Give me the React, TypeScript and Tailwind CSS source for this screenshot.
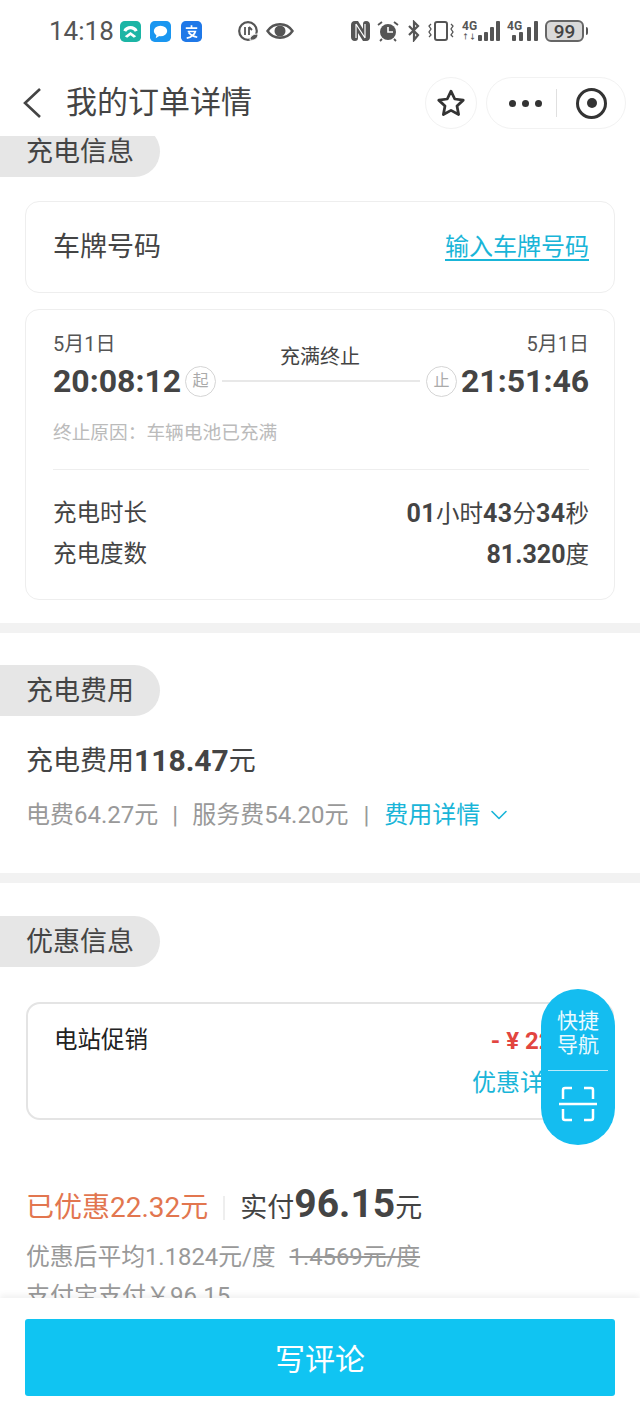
import { ChevronDown } from "lucide-react"

function SectionTag({ label }: { label: string }) {
  return (
    <div className="w-[160px] h-[51px] bg-[#e6e6e6] rounded-r-[26px] flex items-center pl-[26px] pt-[1px] text-[27px] text-[#444] leading-none">
      {label}
    </div>
  )
}

function StatusLeft() {
  return (
    <div className="flex items-center">
      <span className="text-[26px] text-[#555] ml-[49px] w-[64px] leading-none">14:18</span>
      <svg width="21" height="21" viewBox="0 0 22 22" className="ml-[7px]">
        <rect width="22" height="22" rx="5" fill="#1cb5a5" />
        <path d="M3.500 10c2-6.500 13-6.500 15 0l-3 1.200c-1.500-3.500-7.500-3.500-9 0z M5 16l6-4.500 6 4.500-2.500 1.500-3.500-2.500-3.500 2.500z" fill="#fff" />
      </svg>
      <svg width="21" height="21" viewBox="0 0 22 22" className="ml-[9px]">
        <rect width="22" height="22" rx="5" fill="#1a96f0" />
        <ellipse cx="11" cy="10.500" rx="7" ry="5.500" fill="#fff" />
        <path d="M7 14l-1 4 5-3z" fill="#fff" />
      </svg>
      <svg width="21" height="21" viewBox="0 0 22 22" className="ml-[10px]">
        <rect width="22" height="22" rx="5" fill="#1f78e8" />
        <path d="M5 7.500h12M11 4.500v3M7 11h8c-1 4-4 6-9 7M8 12c2 3 5 4 9 5" stroke="#fff" strokeWidth="1.800" fill="none" />
      </svg>
      <svg width="22" height="22" viewBox="0 0 22 22" className="ml-[35px]">
        <circle cx="11" cy="11" r="8.800" stroke="#555" strokeWidth="2.200" fill="none" />
        <path d="M8 7v8M12 7v8M12 7l3 3" stroke="#555" strokeWidth="1.800" fill="none" />
        <path d="M13 20c0-4 3-6 8-6 0 4-3 7-8 6z" fill="#555" stroke="#fff" strokeWidth="1" />
      </svg>
      <svg width="28" height="20" viewBox="0 0 28 20" className="ml-[7px]">
        <path d="M1.500 10c6-9 19-9 25 0-6 9-19 9-25 0z" stroke="#555" strokeWidth="2.400" fill="none" />
        <circle cx="14" cy="10" r="5.500" fill="#555" />
      </svg>
    </div>
  )
}

function StatusRight() {
  return (
    <div className="flex items-center ml-auto mr-[52px]">
      <svg width="19" height="20" viewBox="0 0 19 20">
        <path d="M4 0h3l5 8V3c0-2 1-3 3-3 3 0 4 2 4 4v12c0 2-1 4-4 4h-3l-5-8v5c0 2-1 3-3 3-3 0-4-2-4-4V4c0-2 1-4 4-4z" fill="#555" />
        <path d="M5 3v14M14 3v14M5 3l9 14" stroke="#fff" strokeWidth="1.200" fill="none" />
      </svg>
      <svg width="22" height="22" viewBox="0 0 22 22" className="ml-[7px]">
        <circle cx="11" cy="12" r="8" fill="#555" />
        <path d="M11 7v5h5" stroke="#fff" strokeWidth="1.600" fill="none" />
        <path d="M1 5l4-3M21 5l-4-3M5 19l-2 2M17 19l2 2" stroke="#555" strokeWidth="1.800" />
      </svg>
      <svg width="14" height="22" viewBox="0 0 14 22" className="ml-[8px]">
        <path d="M2 6l9 9-4 5V2l4 4-9 9" stroke="#555" strokeWidth="2.200" fill="none" />
      </svg>
      <svg width="26" height="20" viewBox="0 0 26 20" className="ml-[7px]">
        <rect x="7" y="1" width="12" height="18" rx="2" stroke="#555" strokeWidth="2" fill="none" />
        <path d="M3 3l-2 2 2 3-2 3 2 3-2 2M23 3l2 2-2 3 2 3-2 3 2 2" stroke="#555" strokeWidth="1.300" fill="none" />
      </svg>
      <div className="relative w-[38px] h-[20px] ml-[8px]">
        <span className="absolute left-0 top-[-1px] text-[12px] font-bold text-[#555] leading-none">4G</span>
        <span className="absolute left-0 bottom-[0px] text-[7px] font-bold text-[#555] leading-none">↑↓</span>
        <svg width="38" height="20" viewBox="0 0 38 20" className="absolute left-0 top-0">
          <rect x="16" y="14" width="4" height="6" rx="1" fill="#555" />
          <rect x="22" y="11" width="4" height="9" rx="1" fill="#555" />
          <rect x="28" y="6" width="4" height="14" rx="1" fill="#555" />
          <rect x="34" y="0" width="4" height="20" rx="1" fill="#555" />
        </svg>
      </div>
      <div className="relative w-[31px] h-[20px] ml-[7px]">
        <span className="absolute left-0 top-[-1px] text-[12px] font-bold text-[#555] leading-none">4G</span>
        <svg width="31" height="20" viewBox="0 0 31 20" className="absolute left-0 top-0">
          <rect x="5" y="14" width="4" height="6" rx="1" fill="#555" />
          <rect x="12" y="11" width="4" height="9" rx="1" fill="#555" />
          <rect x="20" y="6" width="4" height="14" rx="1" fill="#555" />
          <rect x="27" y="0" width="4" height="20" rx="1" fill="#555" />
        </svg>
      </div>
      <div className="ml-[7px] w-[39px] h-[22px] rounded-[6px] border-2 border-[#666] bg-[#d9d9d9] flex items-center justify-center text-[19px] leading-none font-medium text-[#444]">
        99
      </div>
      <div className="w-[2px] h-[8px] bg-[#555] ml-[2px] rounded-r" />
    </div>
  )
}

function Header() {
  return (
    <div className="h-[136px] shrink-0 bg-white relative z-10">
      <div className="h-[62px] flex items-center">
        <StatusLeft />
        <StatusRight />
      </div>
      <div className="h-[52px] mt-[15px] flex items-center">
        <svg width="20" height="32" viewBox="0 0 20 32" fill="none" stroke="#444" strokeWidth="2.600" className="ml-[22px]">
          <path d="M18 2L3 16l15 14" />
        </svg>
        <span className="ml-[24px] mb-[2px] text-[31px] text-[#444] leading-none">我的订单详情</span>
        <div className="ml-auto mr-[14px] flex items-center gap-[9px]">
          <div className="w-[52px] h-[52px] rounded-full border border-[#f2f2f2] flex items-center justify-center">
            <svg width="30" height="30" viewBox="0 0 24 24" fill="none" stroke="#333" strokeWidth="2.200" strokeLinejoin="round">
              <path d="M12 2.500l3 6.300 6.800.9-5 4.700 1.300 6.800-6.100-3.300-6.100 3.300 1.300-6.800-5-4.700 6.800-.9z" />
            </svg>
          </div>
          <div className="w-[140px] h-[52px] rounded-full border border-[#f2f2f2] flex items-center">
            <div className="flex gap-[6px] ml-[22px]">
              <span className="w-[7px] h-[7px] rounded-full bg-[#333]" />
              <span className="w-[7px] h-[7px] rounded-full bg-[#333]" />
              <span className="w-[7px] h-[7px] rounded-full bg-[#333]" />
            </div>
            <div className="w-px h-[28px] bg-[#e0e0e0] ml-[14px]" />
            <div className="w-[31px] h-[31px] ml-[19px] rounded-full border-[3.500px] border-[#333] flex items-center justify-center">
              <span className="w-[10px] h-[10px] rounded-full bg-[#333]" />
            </div>
          </div>
        </div>
      </div>
    </div>
  )
}

function TimeBlock() {
  return (
    <div className="mx-[25px] mt-[16px] h-[291px] border border-[#eeeeee] rounded-[14px] pl-[27px] pr-[25px] relative">
      <div className="flex justify-between pt-[22px] text-[20px] leading-[24px] text-[#555]">
        <span>5月1日</span>
        <span>5月1日</span>
      </div>
      <div className="flex items-center h-[38px] mt-[6px]">
        <span className="text-[32px] font-bold text-[#444] leading-none w-[128px]">20:08:12</span>
        <span className="w-[31px] h-[31px] ml-[4px] rounded-full border border-[#d5d5d5] flex items-center justify-center text-[16px] text-[#aaa] leading-none">起</span>
        <div className="flex-1 h-[2px] bg-[#e8e8e8] mx-[6px]" />
        <span className="w-[31px] h-[31px] mr-[4px] rounded-full border border-[#d5d5d5] flex items-center justify-center text-[16px] text-[#aaa] leading-none">止</span>
        <span className="text-[32px] font-bold text-[#444] leading-none w-[128px] text-right">21:51:46</span>
      </div>
      <div className="absolute left-0 right-0 top-[34px] text-center text-[20px] leading-[26px] text-[#444]">充满终止</div>
      <div className="mt-[21px] text-[18.700px] leading-[24px] text-[#bbbbbb]">终止原因：车辆电池已充满</div>
      <div className="h-px bg-[#eeeeee] mt-[24px]" />
      <div className="flex justify-between items-center mt-[23px] h-[41px] text-[23.500px] text-[#444] leading-none">
        <span>充电时长</span>
        <span>
          <b className="font-bold text-[25px] tracking-[0.400px]">01</b>小时<b className="font-bold text-[25px] tracking-[0.400px]">43</b>分<b className="font-bold text-[25px] tracking-[0.400px]">34</b>秒
        </span>
      </div>
      <div className="flex justify-between items-center h-[41px] text-[23.500px] text-[#444] leading-none">
        <span>充电度数</span>
        <span>
          <b className="font-bold text-[25px]">81.320</b>度
        </span>
      </div>
    </div>
  )
}

export default function App() {
  return (
    <div className="relative w-[640px] h-[1416px] overflow-hidden bg-white flex flex-col font-['Roboto','Noto_Sans_CJK_SC',sans-serif]">
      <Header />

      <div className="flex-1 min-h-0 overflow-hidden">
        <div className="mt-[-10px]">
          <SectionTag label="充电信息" />
        </div>
        <div className="mx-[25px] mt-[24px] h-[92px] border border-[#eeeeee] rounded-[14px] pl-[27px] pr-[25px] flex items-center justify-between">
          <span className="text-[27px] text-[#444] leading-none">车牌号码</span>
          <span className="text-[24px] text-[#19b5d8] underline underline-offset-[4px] leading-none">输入车牌号码</span>
        </div>
        <TimeBlock />
        <div className="h-[10px] bg-[#f2f2f2] mt-[23px]" />

        <div className="mt-[32px]">
          <SectionTag label="充电费用" />
        </div>
        <div className="mt-[27px] ml-[26px] h-[36px] flex items-center text-[27px] text-[#444] leading-none">
          充电费用<b className="font-bold text-[30px]">118.47</b>元
        </div>
        <div className="mt-[19px] ml-[26px] h-[34px] flex items-center text-[24px] text-[#999] leading-none">
          <span>电费64.27元</span>
          <span className="mx-[14px] text-[24px]">|</span>
          <span>服务费54.20元</span>
          <span className="mx-[15px] text-[24px]">|</span>
          <span className="text-[#19b5d8]">费用详情</span>
          <ChevronDown className="w-[28px] h-[28px] ml-[5px] text-[#19b5d8]" strokeWidth={1.400} />
        </div>
        <div className="h-[10px] bg-[#f2f2f2] mt-[41px]" />

        <div className="mt-[33px]">
          <SectionTag label="优惠信息" />
        </div>
        <div className="mx-[26px] mt-[35px] h-[118px] border-2 border-[#e4e4e4] rounded-[14px] pl-[26px] pr-[20px] pt-[21px]">
          <div className="flex justify-between h-[32px] items-center leading-none">
            <span className="text-[23.500px] text-[#222]">电站促销</span>
            <span className="text-[24px] font-bold text-[#e2453f] whitespace-pre pr-[5px]">- ¥ 22.32</span>
          </div>
          <div className="flex justify-end items-center text-[24px] text-[#19b5d8] leading-none mt-[14px]">
            <span>优惠详情</span>
            <ChevronDown className="w-[24px] h-[24px] text-[#19b5d8]" strokeWidth={1.400} />
          </div>
        </div>
        <div className="mt-[65px] ml-[26px] h-[46px] flex items-baseline leading-none">
          <span className="text-[28px] text-[#e2764f]">已优惠22.32元</span>
          <span className="w-[2px] h-[24px] bg-[#eeeeee] mx-[15px] self-center" />
          <span className="text-[27px] text-[#444]">实付</span>
          <b className="text-[39px] font-bold text-[#444]">96.15</b>
          <span className="text-[27px] text-[#444]">元</span>
        </div>
        <div className="mt-[10px] ml-[26px] h-[34px] flex items-center text-[23.800px] text-[#999] leading-none">
          <span>优惠后平均1.1824元/度</span>
          <span className="ml-[14px] line-through">1.4569元/度</span>
        </div>
        <div className="mt-[6px] ml-[26px] text-[24px] text-[#999] leading-[30px]">支付宝支付￥96.15</div>
      </div>

      <div className="h-[118px] shrink-0 bg-white relative z-10 shadow-[0_-3px_6px_rgba(0,0,0,0.06)] px-[25px] pt-[21px]">
        <button className="w-full h-[77px] bg-[#10c4f2] rounded-[3px] pt-[5px] text-white text-[30px] leading-none">写评论</button>
      </div>

      {/* 快捷导航 floats over the page */}
      <div className="absolute left-[541px] top-[989px] w-[74px] h-[156px] rounded-full bg-[#14bdf0] flex flex-col items-center pt-[20px] text-[#eafaff] text-[21px] leading-[24px]">
        <span>快捷</span>
        <span>导航</span>
        <div className="w-[60px] h-px bg-white/70 mt-[13px]" />
        <svg width="38" height="36" viewBox="0 0 38 36" fill="none" stroke="#fff" strokeWidth="2.500" className="mt-[15px]">
          <path d="M4 13V4a2 2 0 0 1 2-2h7M34 13V4a2 2 0 0 0-2-2h-7M4 23v9a2 2 0 0 0 2 2h7M34 23v9a2 2 0 0 1-2 2h-7M0 18h38" />
        </svg>
      </div>
    </div>
  )
}
